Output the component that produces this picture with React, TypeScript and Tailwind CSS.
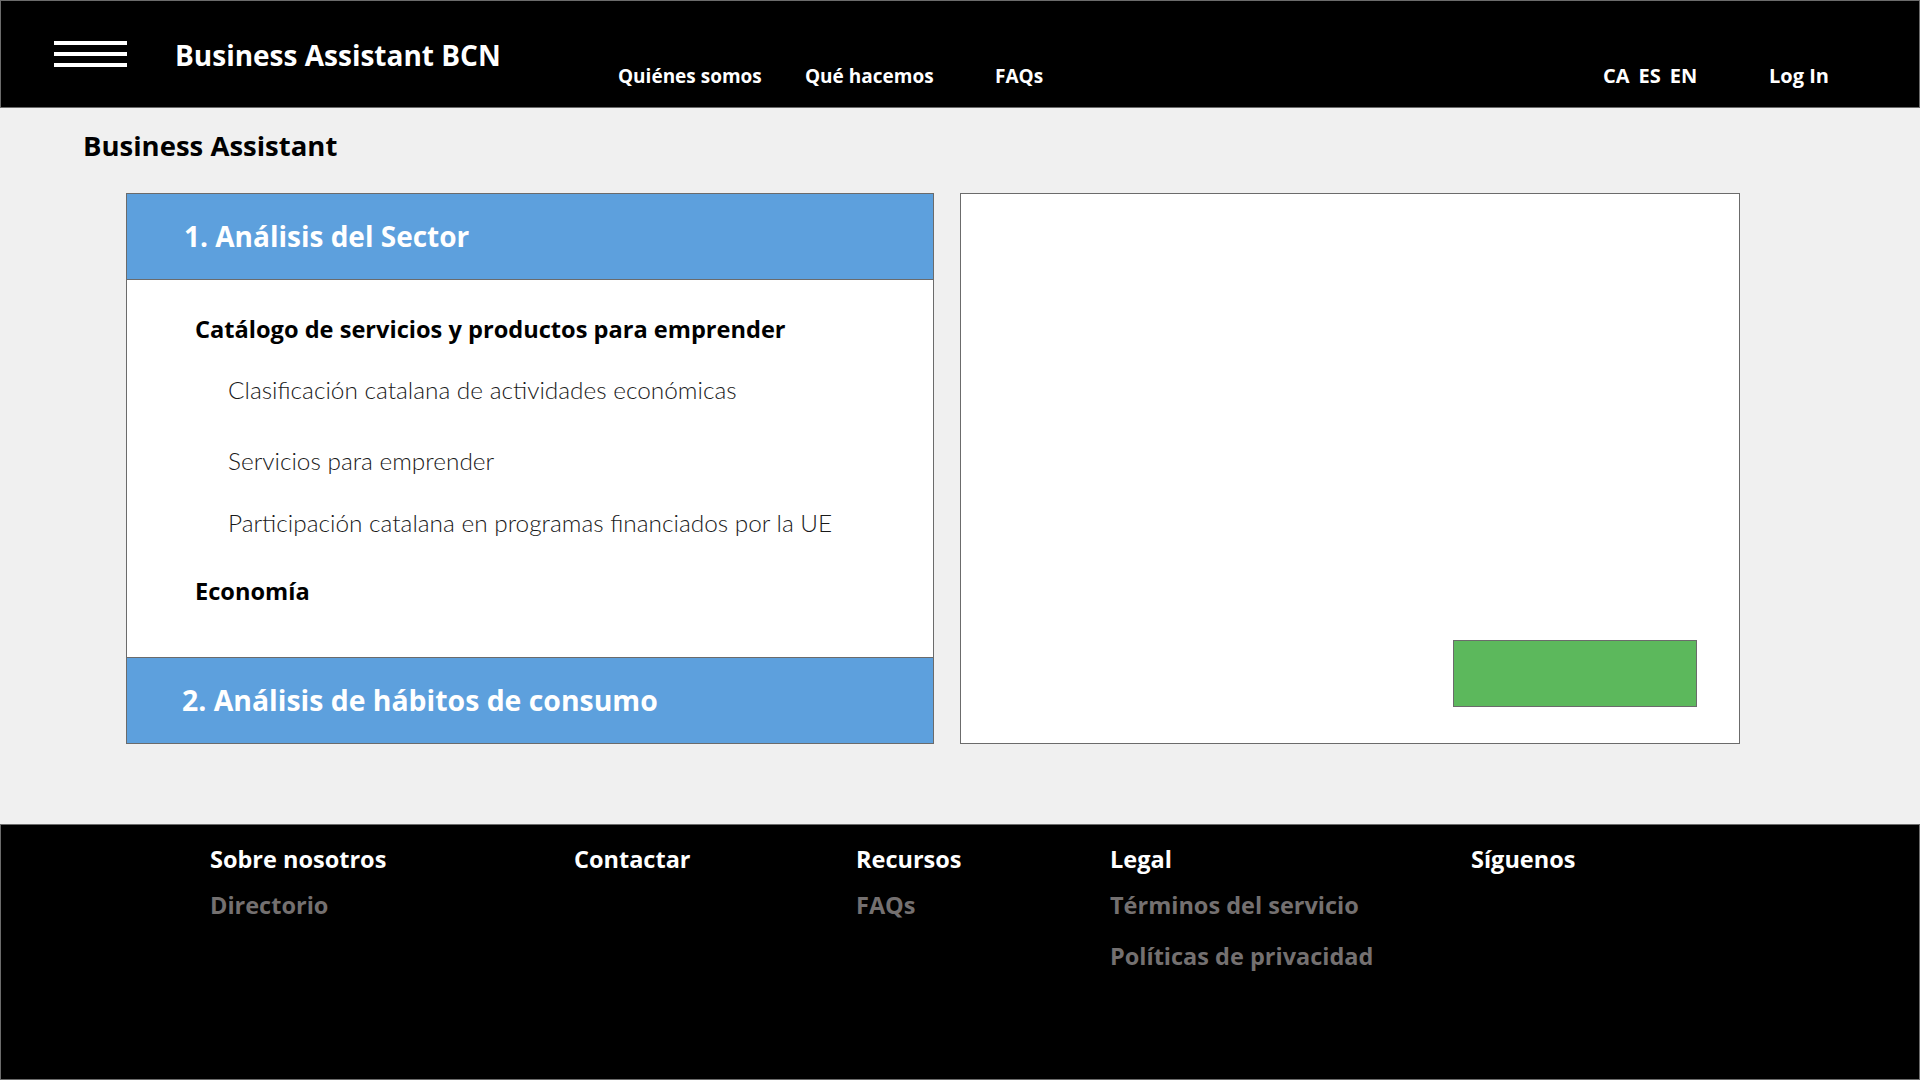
import React from "react";

export default function App() {
  return (
    <div className="w-full h-[1080px] bg-[#f0f0f0] flex flex-col font-['Open_Sans',_'Lato',_sans-serif]">
      {/* Header */}
      <header className="h-[108px] shrink-0 bg-black border border-[#6b6b6b] flex items-start text-white">
        <div className="ml-[53px] mt-[40px] w-[73px] flex flex-col gap-[7px]">
          <div className="h-[4px] bg-white" />
          <div className="h-[4px] bg-white" />
          <div className="h-[4px] bg-white" />
        </div>
        <div className="ml-[48px] mt-[40px] w-[443px] text-[28px] leading-none font-bold">
          Business Assistant BCN
        </div>
        <div className="mt-[66px] w-[187px] text-[19px] leading-none font-bold">Quiénes somos</div>
        <div className="mt-[66px] w-[190px] text-[19px] leading-none font-bold">Qué hacemos</div>
        <div className="mt-[66px] flex-1 text-[19px] leading-none font-bold">FAQs</div>
        <div className="mt-[65px] w-[166px] flex gap-[9px] text-[20px] leading-none font-bold">
          <span>CA</span>
          <span>ES</span>
          <span>EN</span>
        </div>
        <div className="mt-[65px] w-[150px] text-[20px] leading-none font-bold">Log In</div>
      </header>

      {/* Main */}
      <main className="flex flex-col">
        <h1 className="ml-[83px] mt-[24px] text-[27.5px] leading-none font-bold text-black">
          Business Assistant
        </h1>
        <div className="mt-[33px] pl-[126px] flex gap-[26px]">
          <div className="w-[808px] h-[551px] border border-[#6b6b6b] bg-white flex flex-col">
            <div className="h-[86px] shrink-0 bg-[#5da0dd] border-b border-[#6b6b6b] flex items-center pl-[57px]">
              <span className="text-[28px] leading-none font-bold text-white">1. Análisis del Sector</span>
            </div>
            <div className="h-[377px] shrink-0 flex flex-col leading-none text-black">
              <div className="mt-[38px] ml-[68px] text-[23.6px] font-bold">Catálogo de servicios y productos para emprender</div>
              <div className="mt-[37px] ml-[101px] text-[24.4px] font-light font-['Lato',_sans-serif] text-[#1a1a1a]">Clasificación catalana de actividades económicas</div>
              <div className="mt-[46px] ml-[101px] text-[24.4px] font-light font-['Lato',_sans-serif] text-[#1a1a1a]">Servicios para emprender</div>
              <div className="mt-[38px] ml-[101px] text-[24.4px] font-light font-['Lato',_sans-serif] text-[#1a1a1a]">Participación catalana en programas financiados por la UE</div>
              <div className="mt-[45px] ml-[68px] text-[23.6px] font-bold">Economía</div>
            </div>
            <div className="flex-1 bg-[#5da0dd] border-t border-[#6b6b6b] flex items-center pl-[55px]">
              <span className="text-[28.4px] leading-none font-bold text-white">2. Análisis de hábitos de consumo</span>
            </div>
          </div>
          <div className="w-[780px] h-[551px] border border-[#6b6b6b] bg-white flex items-end justify-end pr-[42px] pb-[36px]">
            <div className="w-[244px] h-[67px] bg-[#5cb85c] border border-[#6b6b6b]" />
          </div>
        </div>
      </main>

      <div className="flex-1" />

      {/* Footer */}
      <footer className="h-[256px] shrink-0 bg-black border border-[#6b6b6b] flex pl-[209px] pt-[23px] text-[23.5px] leading-none font-bold">
        <div className="w-[364px] flex flex-col">
          <div className="text-white">Sobre nosotros</div>
          <div className="mt-[22px] text-[#747070]">Directorio</div>
        </div>
        <div className="w-[282px] flex flex-col">
          <div className="text-white">Contactar</div>
        </div>
        <div className="w-[254px] flex flex-col">
          <div className="text-white">Recursos</div>
          <div className="mt-[22px] text-[#747070]">FAQs</div>
        </div>
        <div className="w-[361px] flex flex-col">
          <div className="text-white">Legal</div>
          <div className="mt-[22px] text-[#747070]">Términos del servicio</div>
          <div className="mt-[28px] text-[#747070]">Políticas de privacidad</div>
        </div>
        <div className="flex flex-col">
          <div className="text-white">Síguenos</div>
        </div>
      </footer>
    </div>
  );
}
